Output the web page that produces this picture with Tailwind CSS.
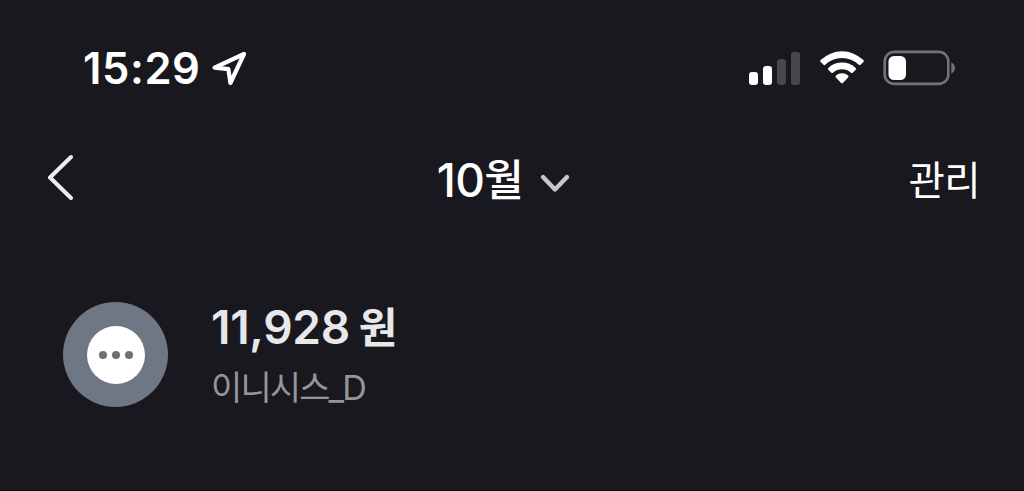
<!DOCTYPE html>
<html lang="ko">
<head>
  <meta charset="UTF-8">
  <title>10월</title>
  <script src="https://cdn.jsdelivr.net/npm/@tailwindcss/browser@4"></script>
</head>
<body class="w-[1024px] h-[491px] flex flex-col overflow-hidden bg-[#19181e] border-b border-[#0d0c10] text-white font-[Inter,'Noto_Sans_CJK_KR',sans-serif] whitespace-nowrap">

  <!-- status bar -->
  <div class="h-[136px] shrink-0 flex items-center justify-between pl-[83px] pr-[68px]">
    <div class="flex items-center">
      <span class="w-[127px] pt-0.5 text-[43.5px] leading-none font-semibold tracking-[0.6px]">15:29</span>
      <svg class="w-9 h-9" viewBox="0 0 36 36" fill="none" stroke="#fff" stroke-width="4.2" stroke-linejoin="round">
        <path d="M34 4 4.6 17.6 18.4 19.2 20.4 33Z"/>
      </svg>
    </div>
    <div class="flex items-center">
      <div class="w-[51px] mr-5 h-[33px] flex items-end justify-between">
        <div class="w-[9px] h-[13px] rounded-[3px] bg-white"></div>
        <div class="w-[9px] h-[19px] rounded-[3px] bg-white"></div>
        <div class="w-[9px] h-[26px] rounded-[3px] bg-[#47464b]"></div>
        <div class="w-[9px] h-[33px] rounded-[3px] bg-[#47464b]"></div>
      </div>
      <svg class="w-11 h-[34px] mr-[19px]" viewBox="0 0 44 34" fill="#fff">
        <path d="M.6 9.1a30.6 30.6 0 0 1 42.8 0q.9.9 0 1.8l-2.9 2.9q-.8.8-1.7 0a24.4 24.4 0 0 0-33.6 0q-.9.8-1.7 0L.6 10.9q-.9-.9 0-1.8Z"/>
        <path d="M8.3 16.9a19.8 19.8 0 0 1 27.4 0q.9.9 0 1.8l-3 3q-.8.8-1.7 0a13.5 13.5 0 0 0-18 0q-.9.8-1.7 0l-3-3q-.9-.9 0-1.8Z"/>
        <path d="M15.9 24.6a9.2 9.2 0 0 1 12.2 0q.9.9 0 1.8l-5.2 5.6q-.9.9-1.8 0l-5.2-5.6q-.9-.9 0-1.8Z"/>
      </svg>
      <svg class="w-[73px] h-9" viewBox="0 0 73 36">
        <rect x="1.7" y="1.9" width="63.6" height="32" rx="9.5" fill="none" stroke="#737277" stroke-width="2.6"/>
        <rect x="5.5" y="6" width="17.5" height="24" rx="5.5" fill="#fff"/>
        <path d="M68.3 12.5Q72 14.5 72 18T68.3 23.5Z" fill="#737277"/>
      </svg>
    </div>
  </div>

  <!-- header -->
  <div class="h-[88px] shrink-0 grid grid-cols-3 items-center pl-[46px] pr-[44px]">
    <svg class="w-7 h-12 -mt-2" viewBox="0 0 28 48" fill="none" stroke="#ececee" stroke-width="4" stroke-linecap="round" stroke-linejoin="round">
      <path d="M25 5 4 25.5 25 46"/>
    </svg>
    <div class="flex items-center justify-center pr-[18px]">
      <span class="text-[46px] leading-none font-medium tracking-[-0.6px]">10<span class="relative -top-px text-[43px]">월</span></span>
      <svg class="w-8 h-6 ml-4 mt-1.5" viewBox="0 0 32 24" fill="none" stroke="#c6c6c9" stroke-width="4.4" stroke-linecap="round" stroke-linejoin="round">
        <path d="M4 6 16 18.5 28 6"/>
      </svg>
    </div>
    <span class="pt-1 text-right text-[39.5px] leading-none tracking-[-0.6px]">관리</span>
  </div>

  <!-- payment -->
  <div class="mt-[78px] flex pl-[63px]">
    <div class="w-[105px] h-[105px] rounded-full bg-[#6f7684] flex items-center justify-center">
      <div class="w-[58px] h-[58px] rounded-full bg-white flex items-center justify-center gap-[5px]">
        <div class="size-2 rounded-full bg-[#6f7078]"></div>
        <div class="size-2 rounded-full bg-[#6f7078]"></div>
        <div class="size-2 rounded-full bg-[#6f7078]"></div>
      </div>
    </div>
    <div class="ml-[43px] flex flex-col">
      <span class="h-[52px] text-[46px] leading-[50px] font-semibold tracking-[-0.3px] text-[#e8e8ea]">11,928<span class="relative -top-px ml-[9px] text-[42px]">원</span></span>
      <span class="mt-3.5 h-10 text-[34px] leading-10 tracking-[-1.9px] text-[#96959a]">이니시스_D</span>
    </div>
  </div>
</body>
</html>
